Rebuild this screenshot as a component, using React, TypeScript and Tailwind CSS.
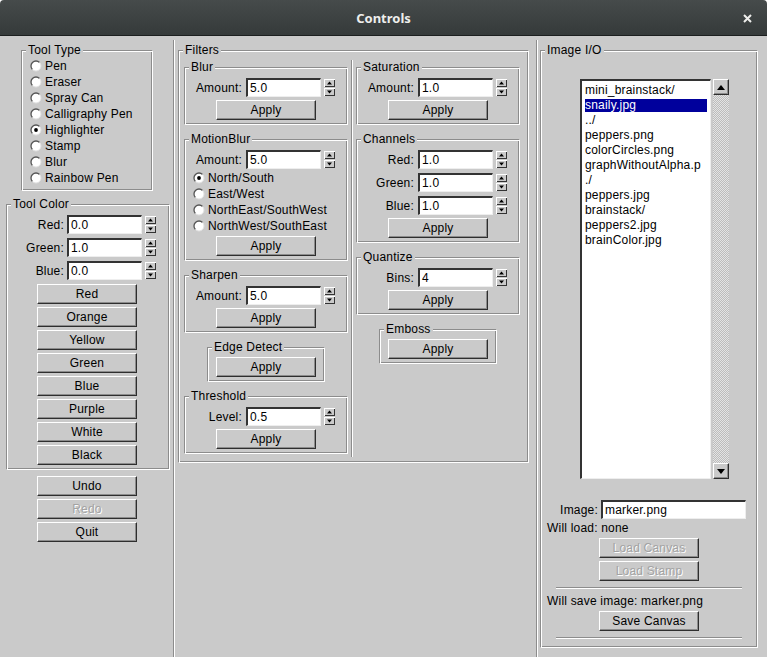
import React from "react";

const files = [
  "mini_brainstack/",
  "snaily.jpg",
  "../",
  "peppers.png",
  "colorCircles.png",
  "graphWithoutAlpha.p",
  "./",
  "peppers.jpg",
  "brainstack/",
  "peppers2.jpg",
  "brainColor.jpg",
];

function Frame({ title, className = "", children }: { title: string; className?: string; children: React.ReactNode }) {
  return (
    <fieldset
      className={
        "min-w-0 border border-t-[#8c8c8c] border-l-[#8c8c8c] border-b-white border-r-white shadow-[inset_1px_1px_0_#fff,inset_-1px_-1px_0_#8c8c8c] " +
        className
      }
    >
      <legend className="ml-[4px] px-[2px] bg-[#cacaca] leading-[14px]">{title}</legend>
      {children}
    </fieldset>
  );
}

function Btn({ children, disabled, className = "" }: { children: React.ReactNode; disabled?: boolean; className?: string }) {
  return (
    <div
      className={
        "flex h-[20px] w-[100px] shrink-0 items-center justify-center border border-t-white border-l-white border-b-[#2e2e2e] border-r-[#2e2e2e] shadow-[inset_-1px_-1px_0_#8c8c8c] " +
        (disabled ? "text-[#a3a3a3] [text-shadow:1px_1px_0_#fff] " : "text-black ") +
        className
      }
    >
      {children}
    </div>
  );
}

function Entry({ value, className = "w-[75px]" }: { value: string; className?: string }) {
  return (
    <div
      className={
        "h-[19px] shrink-0 bg-white border-t-2 border-l-2 border-b border-r border-t-[#333] border-l-[#333] border-b-[#eeeeee] border-r-[#eeeeee] pl-[2px] leading-[16px] " +
        className
      }
    >
      {value}
    </div>
  );
}

function Spin() {
  return (
    <svg width="11" height="17" viewBox="0 0 11 17" className="shrink-0 ml-[3px]">
      <rect width="11" height="17" fill="#cacaca" />
      <path d="M0 0H11V1H1V8H0Z" fill="#fff" />
      <path d="M10 1H11V8H1V7H10Z" fill="#333" />
      <path d="M5.5 2.5L8 5.5H3Z" fill="#000" />
      <path d="M0 9H11V10H1V17H0Z" fill="#fff" />
      <path d="M10 10H11V17H1V16H10Z" fill="#333" />
      <path d="M3 11.5H8L5.5 14.5Z" fill="#000" />
    </svg>
  );
}

function Radio({ checked }: { checked?: boolean }) {
  return (
    <svg width="12" height="12" viewBox="0 0 12 12" className="shrink-0">
      <circle cx="6" cy="6" r="5" fill="#fff" />
      <path d="M9.54 2.46A5 5 0 0 0 2.46 9.54" fill="none" stroke="#555" strokeWidth="1.3" />
      <path d="M9.54 2.46A5 5 0 0 1 2.46 9.54" fill="none" stroke="#e2e2e2" strokeWidth="1" />
      {checked && <circle cx="6" cy="6" r="1.9" fill="#000" />}
    </svg>
  );
}

function RadioRow({ label, checked }: { label: string; checked?: boolean }) {
  return (
    <div className="flex h-[16px] items-center gap-[3px]">
      <Radio checked={checked} />
      <span>{label}</span>
    </div>
  );
}

function SpinRow({ label, value, labelClass = "w-[57px]" }: { label: string; value: string; labelClass?: string }) {
  return (
    <div className="flex h-[19px] items-center">
      <span className={"shrink-0 text-right " + labelClass}>{label}</span>
      <Entry value={value} className="ml-[4px] w-[75px]" />
      <Spin />
    </div>
  );
}

function Arrow({ up }: { up?: boolean }) {
  return (
    <div className="flex h-[16px] w-[16px] items-center justify-center border border-t-white border-l-white border-b-[#2e2e2e] border-r-[#2e2e2e] bg-[#cacaca] shadow-[inset_-1px_-1px_0_#8c8c8c]">
      <svg width="8" height="5" viewBox="0 0 8 5">
        {up ? <path d="M4 0L8 5H0Z" fill="#000" /> : <path d="M0 0H8L4 5Z" fill="#000" />}
      </svg>
    </div>
  );
}

export default function App() {
  return (
    <div className="flex h-[657px] w-[767px] flex-col overflow-hidden font-['Liberation_Sans',Arial,sans-serif] text-[12px] leading-[14px] tracking-[0.2px] text-black">
      {/* Window title */}
      <div className="relative flex h-[36px] shrink-0 items-center justify-center rounded-t-[4px] border-b border-b-[#1c1f1f] bg-gradient-to-b from-[#464b4b] to-[#353a3a]">
        <span className="font-['Noto_Sans',sans-serif] text-[13px] font-bold tracking-normal text-[#eeeeec]">Controls</span>
        <svg width="9" height="9" viewBox="0 0 9 9" className="absolute right-[15px] top-[14px]">
          <path d="M1 1L8 8M8 1L1 8" stroke="#eeeeec" strokeWidth="2" />
        </svg>
      </div>

      <div className="flex flex-1 bg-[#cacaca] pt-[4px]">
        {/* Tools column */}
        <div className="flex w-[173px] shrink-0 flex-col">
          <Frame title="Tool Type" className="ml-[21px] mt-[3px] w-[132px]">
            <div className="pl-[8px] pt-[1px] pb-[4px]">
              <RadioRow label="Pen" />
              <RadioRow label="Eraser" />
              <RadioRow label="Spray Can" />
              <RadioRow label="Calligraphy Pen" />
              <RadioRow label="Highlighter" checked />
              <RadioRow label="Stamp" />
              <RadioRow label="Blur" />
              <RadioRow label="Rainbow Pen" />
            </div>
          </Frame>

          <Frame title="Tool Color" className="ml-[6px] mt-[6px] w-[164px]">
            <div className="flex flex-col pt-[4px] pb-[4px]">
              <div className="flex flex-col gap-[4px]">
                <SpinRow label="Red:" value="0.0" labelClass="w-[57px] mr-[-1px]" />
                <SpinRow label="Green:" value="1.0" labelClass="w-[57px] mr-[-1px]" />
                <SpinRow label="Blue:" value="0.0" labelClass="w-[57px] mr-[-1px]" />
              </div>
              <div className="ml-[30px] mt-[4px] flex flex-col gap-[3px]">
                <Btn>Red</Btn>
                <Btn>Orange</Btn>
                <Btn>Yellow</Btn>
                <Btn>Green</Btn>
                <Btn>Blue</Btn>
                <Btn>Purple</Btn>
                <Btn>White</Btn>
                <Btn>Black</Btn>
              </div>
            </div>
          </Frame>

          <div className="ml-[37px] mt-[6px] flex flex-col gap-[3px]">
            <Btn>Undo</Btn>
            <Btn disabled>Redo</Btn>
            <Btn>Quit</Btn>
          </div>
        </div>

        <div className="w-[2px] shrink-0 border-l border-l-[#8c8c8c] border-r border-r-white" />

        {/* Filters column */}
        <div className="w-[361px] shrink-0">
          <Frame title="Filters" className="ml-[3px] mt-[3px] w-[351px]">
            <div className="flex pl-[5px] pt-[3px] pb-[8px]">
              <div className="flex w-[164px] shrink-0 flex-col gap-[7px]">
                <Frame title="Blur">
                  <div className="flex flex-col pt-[4px] pb-[4px]">
                    <SpinRow label="Amount:" value="5.0" />
                    <Btn className="mt-[3px] self-center">Apply</Btn>
                  </div>
                </Frame>
                <Frame title="MotionBlur">
                  <div className="flex flex-col pt-[4px] pb-[4px]">
                    <SpinRow label="Amount:" value="5.0" />
                    <div className="mt-[1px] pl-[8px]">
                      <RadioRow label="North/South" checked />
                      <RadioRow label="East/West" />
                      <RadioRow label="NorthEast/SouthWest" />
                      <RadioRow label="NorthWest/SouthEast" />
                    </div>
                    <Btn className="mt-[2px] self-center">Apply</Btn>
                  </div>
                </Frame>
                <Frame title="Sharpen">
                  <div className="flex flex-col pt-[4px] pb-[4px]">
                    <SpinRow label="Amount:" value="5.0" />
                    <Btn className="mt-[3px] self-center">Apply</Btn>
                  </div>
                </Frame>
                <Frame title="Edge Detect" className="w-[118px] self-center">
                  <div className="flex flex-col items-center pt-[3px] pb-[4px]">
                    <Btn>Apply</Btn>
                  </div>
                </Frame>
                <Frame title="Threshold">
                  <div className="flex flex-col pt-[4px] pb-[4px]">
                    <SpinRow label="Level:" value="0.5" />
                    <Btn className="mt-[3px] self-center">Apply</Btn>
                  </div>
                </Frame>
              </div>

              <div className="mx-[3px] -mb-[3px] w-[2px] shrink-0 border-l border-l-[#8c8c8c] border-r border-r-white" />

              <div className="flex w-[164px] shrink-0 flex-col gap-[7px]">
                <Frame title="Saturation">
                  <div className="flex flex-col pt-[4px] pb-[4px]">
                    <SpinRow label="Amount:" value="1.0" />
                    <Btn className="mt-[3px] self-center">Apply</Btn>
                  </div>
                </Frame>
                <Frame title="Channels">
                  <div className="flex flex-col pt-[4px] pb-[4px]">
                    <div className="flex flex-col gap-[4px]">
                      <SpinRow label="Red:" value="1.0" />
                      <SpinRow label="Green:" value="1.0" />
                      <SpinRow label="Blue:" value="1.0" />
                    </div>
                    <Btn className="mt-[3px] self-center">Apply</Btn>
                  </div>
                </Frame>
                <Frame title="Quantize">
                  <div className="flex flex-col pt-[4px] pb-[4px]">
                    <SpinRow label="Bins:" value="4" />
                    <Btn className="mt-[3px] self-center">Apply</Btn>
                  </div>
                </Frame>
                <Frame title="Emboss" className="w-[118px] self-center">
                  <div className="flex flex-col items-center pt-[3px] pb-[4px]">
                    <Btn>Apply</Btn>
                  </div>
                </Frame>
              </div>
            </div>
          </Frame>
        </div>

        <div className="w-[2px] shrink-0 border-l border-l-[#8c8c8c] border-r border-r-white" />

        {/* Image I/O column */}
        <div className="flex-1">
          <Frame title="Image I/O" className="ml-[2px] mt-[3px] w-[218px]">
            <div className="flex flex-col pb-[8px]">
              <div className="ml-[39px] mt-[22px] flex gap-[2px]">
                <div className="h-[400px] w-[131px] overflow-hidden whitespace-nowrap bg-white border-t-2 border-l-2 border-b border-r border-t-[#333] border-l-[#333] border-b-[#eeeeee] border-r-[#eeeeee] px-[3px] pt-[2px]">
                  {files.map((f, i) => (
                    <div key={i} className="h-[15px] py-[1px]">
                      <div className={i === 1 ? "h-[13px] bg-[#00009c] leading-[13px] text-white" : "h-[13px] leading-[13px]"}>{f}</div>
                    </div>
                  ))}
                </div>
                <div className="flex h-[400px] w-[16px] flex-col justify-between bg-[repeating-conic-gradient(#bcbcbc_0_25%,#e4e4e4_0_50%)] bg-[length:2px_2px]">
                  <Arrow up />
                  <Arrow />
                </div>
              </div>

              <div className="mt-[21px] flex h-[19px] items-center">
                <span className="w-[57px] shrink-0 text-right">Image:</span>
                <Entry value="marker.png" className="ml-[3px] w-[145px]" />
              </div>
              <div className="mt-[2px] h-[14px] pl-[6px]">Will load: none</div>
              <Btn disabled className="mt-[3px] self-center">Load Canvas</Btn>
              <Btn disabled className="mt-[3px] self-center">Load Stamp</Btn>
              <div className="mx-[15px] mt-[6px] h-[2px] border-t border-t-[#8c8c8c] border-b border-b-white" />
              <div className="mt-[5px] h-[14px] pl-[6px]">Will save image: marker.png</div>
              <Btn className="mt-[3px] self-center">Save Canvas</Btn>
              <div className="mx-[15px] mt-[6px] h-[2px] border-t border-t-[#8c8c8c] border-b border-b-white" />
            </div>
          </Frame>
        </div>
      </div>
    </div>
  );
}
